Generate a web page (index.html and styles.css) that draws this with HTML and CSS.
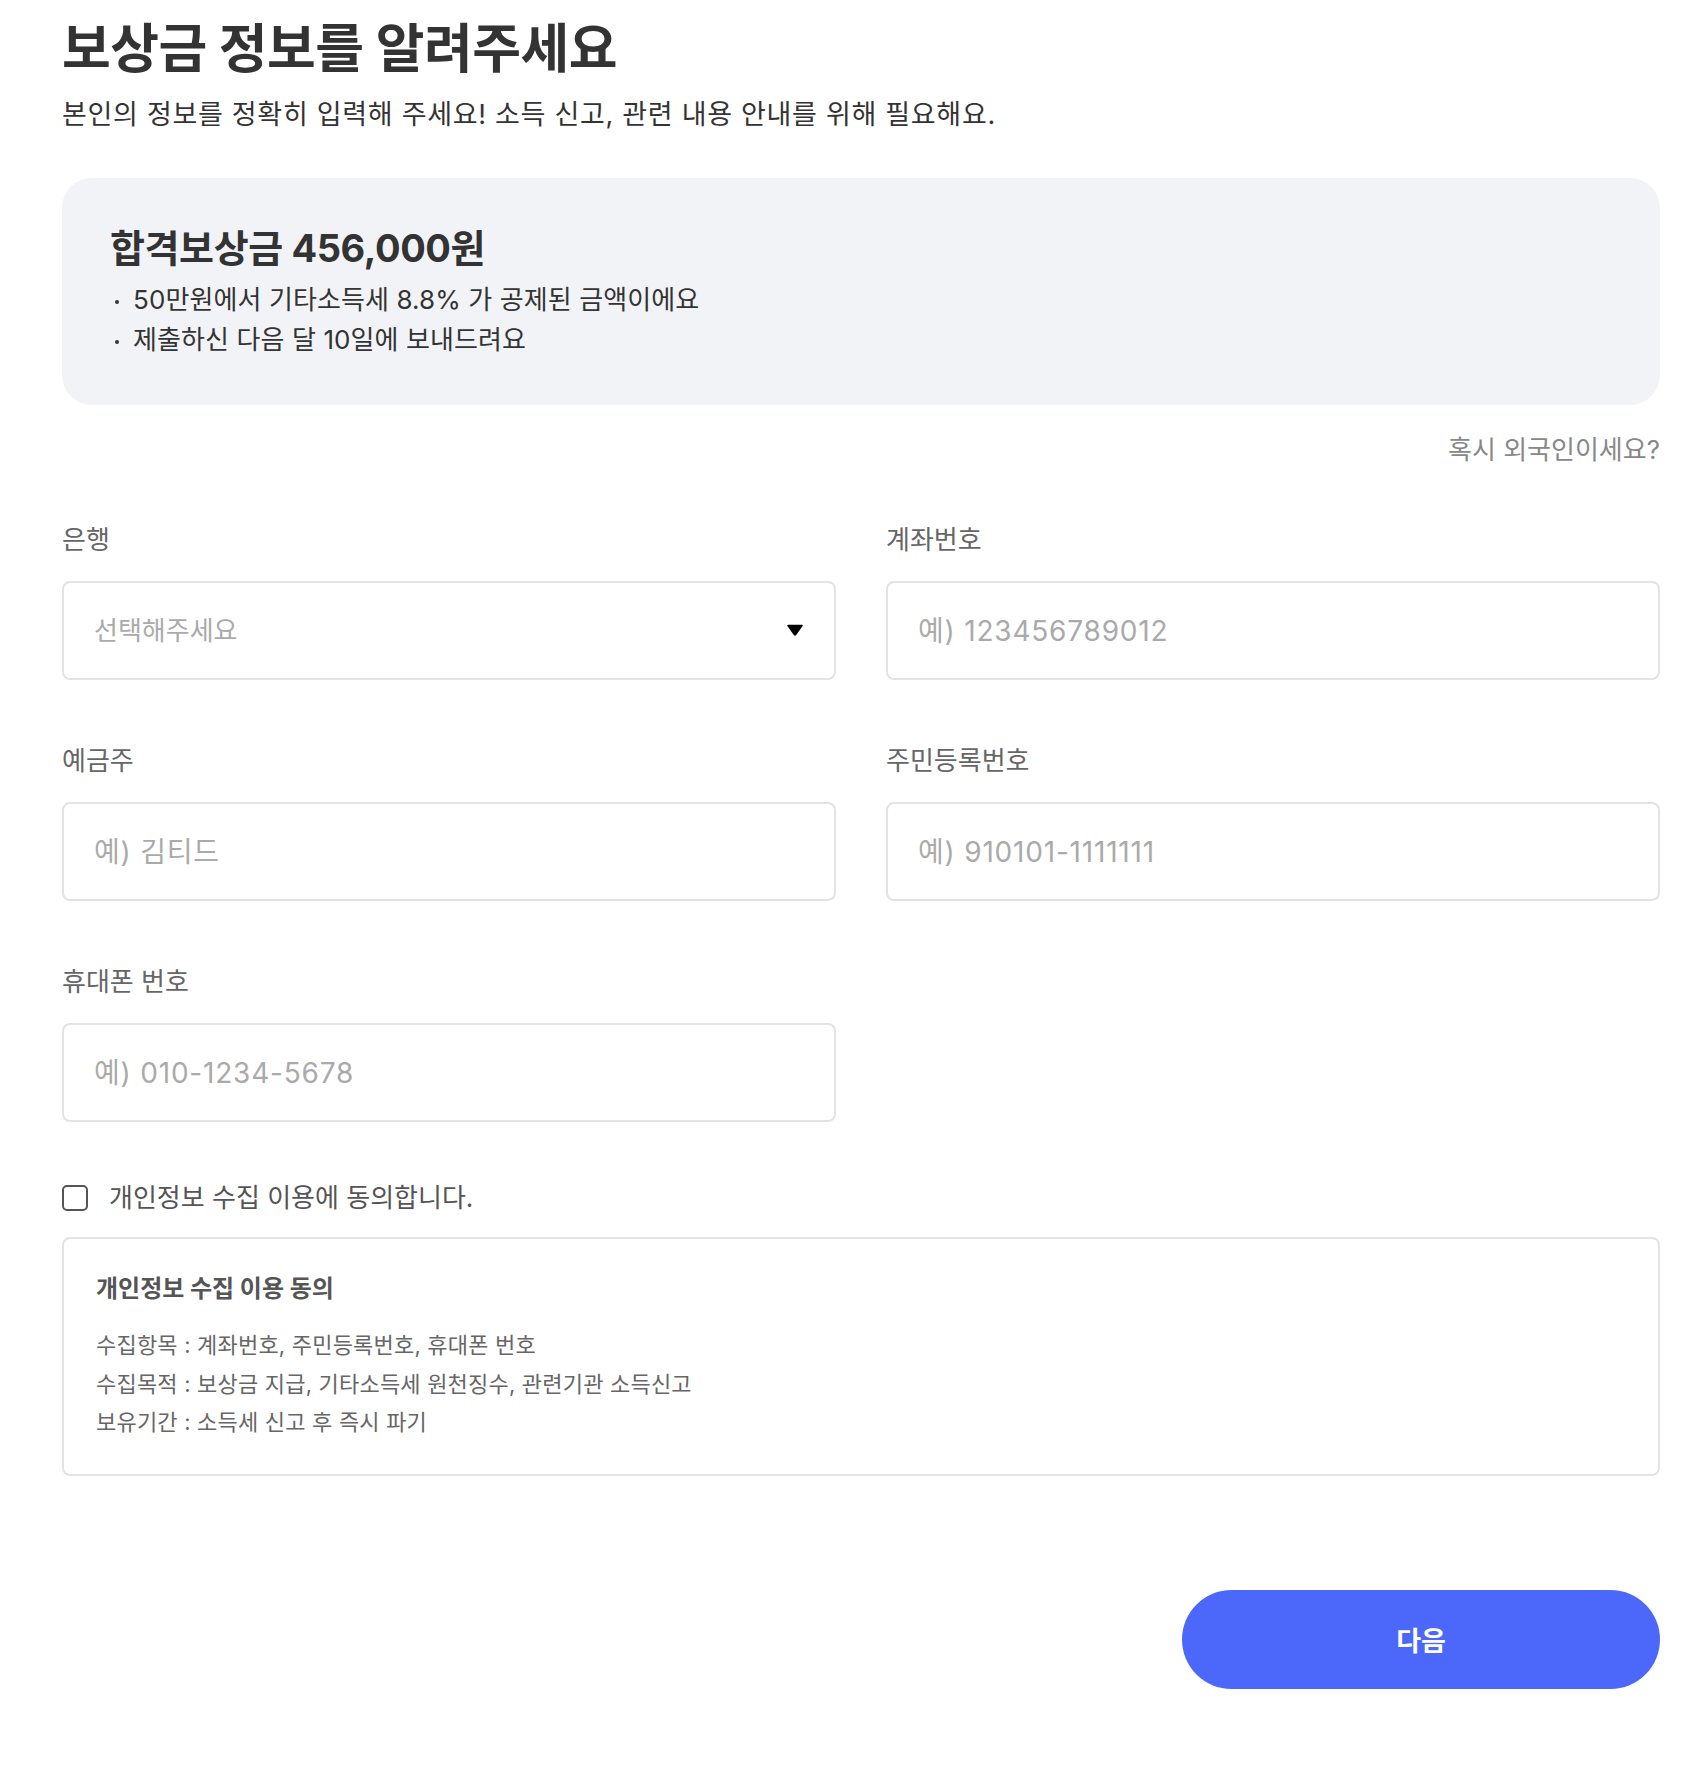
FILE: index.html
```html
<!DOCTYPE html>
<html lang="ko">
<head>
  <meta charset="UTF-8">
  <meta name="viewport" content="width=device-width, initial-scale=1.0">
  <title>보상금 정보 입력</title>
  <link rel="stylesheet" href="styles.css">
</head>
<body>
  <div class="page">
    <!-- 상단 안내 -->
    <h1 class="title">보상금 정보를 알려주세요</h1>
    <p class="subtitle">본인의 정보를 정확히 입력해 주세요! 소득 신고, 관련 내용 안내를 위해 필요해요.</p>

    <!-- 보상금 요약 -->
    <div class="reward-box">
      <h2 class="reward-title">합격보상금 456,000원</h2>
      <ul class="reward-list">
        <li>50만원에서 기타소득세 8.8% 가 공제된 금액이에요</li>
        <li>제출하신 다음 달 10일에 보내드려요</li>
      </ul>
    </div>

    <div class="foreigner-link">혹시 외국인이세요?</div>

    <!-- 입력 폼 -->
    <div class="form-grid">
      <div class="field">
        <label class="field-label">은행</label>
        <div class="select-wrap">
          <select class="field-input field-select">
            <option>선택해주세요</option>
          </select>
          <svg class="select-arrow" width="16" height="12" viewBox="0 0 16 12">
            <path d="M1 1.5 L15 1.5 L8.6 10.6 Q8 11.4 7.4 10.6 Z" fill="#000" stroke="#000" stroke-width="1.5" stroke-linejoin="round"/>
          </svg>
        </div>
      </div>
      <div class="field">
        <label class="field-label">계좌번호</label>
        <input class="field-input" type="text" placeholder="예) 123456789012">
      </div>
      <div class="field">
        <label class="field-label">예금주</label>
        <input class="field-input" type="text" placeholder="예) 김티드">
      </div>
      <div class="field">
        <label class="field-label">주민등록번호</label>
        <input class="field-input" type="text" placeholder="예) 910101-1111111">
      </div>
      <div class="field">
        <label class="field-label">휴대폰 번호</label>
        <input class="field-input" type="text" placeholder="예) 010-1234-5678">
      </div>
    </div>

    <!-- 개인정보 동의 -->
    <label class="agree-row">
      <input class="agree-check" type="checkbox">
      <span>개인정보 수집 이용에 동의합니다.</span>
    </label>

    <div class="terms-box">
      <h3 class="terms-title">개인정보 수집 이용 동의</h3>
      <p class="terms-line">수집항목 : 계좌번호, 주민등록번호, 휴대폰 번호</p>
      <p class="terms-line">수집목적 : 보상금 지급, 기타소득세 원천징수, 관련기관 소득신고</p>
      <p class="terms-line">보유기간 : 소득세 신고 후 즉시 파기</p>
    </div>

    <div class="button-row">
      <button class="next-button">다음</button>
    </div>
  </div>
</body>
</html>
```

FILE: styles.css
```css
body {
  margin: 0;
  background: #fff;
  font-family: "Inter", "Noto Sans CJK KR", sans-serif;
  color: #333;
}

/* === 페이지 틀 === */
.page {
  padding: 20px 38px 82px 62px;
}

.title {
  margin: 0;
  font-size: 53px;
  line-height: 58px;
  font-weight: 700;
  letter-spacing: -0.5px;
  color: #333;
}

.subtitle {
  margin: 19px 0 0;
  font-size: 27px;
  line-height: 36px;
  letter-spacing: 0.7px;
  color: #333;
}

/* === 보상금 박스 === */
.reward-box {
  margin-top: 45px;
  padding: 46px 48px 45px;
  background: #f2f3f7;
  border-radius: 30px;
}

.reward-title {
  margin: 0;
  font-size: 38px;
  line-height: 48px;
  font-weight: 700;
  letter-spacing: -0.4px;
  color: #333;
}

.reward-list {
  list-style: none;
  margin: 8px 0 0;
  padding: 0;
}

.reward-list li {
  position: relative;
  padding-left: 23px;
  font-size: 26px;
  line-height: 40px;
  letter-spacing: 0.1px;
  color: #333;
}

.reward-list li::before {
  content: "";
  position: absolute;
  left: 5px;
  top: 20px;
  width: 4px;
  height: 4px;
  border-radius: 50%;
  background: #333;
}

.foreigner-link {
  margin-top: 28px;
  text-align: right;
  font-size: 26px;
  line-height: 34px;
  color: #888;
  cursor: pointer;
}

/* === 입력 폼 === */
.form-grid {
  margin-top: 56px;
  display: grid;
  grid-template-columns: 1fr 1fr;
  column-gap: 50px;
  row-gap: 64px;
}

.field {
  display: flex;
  flex-direction: column;
}

.field-label {
  font-size: 26px;
  line-height: 34px;
  color: #666;
  margin-bottom: 24px;
}

.field-input {
  box-sizing: border-box;
  width: 100%;
  height: 99px;
  padding: 0 30px;
  border: 2px solid #e3e3e3;
  border-radius: 8px;
  background: #fff;
  font-family: inherit;
  font-size: 28px;
  letter-spacing: 0.8px;
  color: #333;
  outline: none;
}

.field-input::placeholder {
  color: #aaa;
}

.select-wrap {
  position: relative;
}

.field-select {
  appearance: none;
  -webkit-appearance: none;
  color: #aaa;
  font-size: 26px;
  letter-spacing: 0;
}

.select-arrow {
  position: absolute;
  right: 33px;
  top: 43px;
  pointer-events: none;
}

/* === 동의 === */
.agree-row {
  margin-top: 59px;
  display: flex;
  align-items: center;
  gap: 21px;
  font-size: 26px;
  line-height: 34px;
  color: #555;
  cursor: pointer;
}

.agree-check {
  appearance: none;
  -webkit-appearance: none;
  margin: 0;
  width: 26px;
  height: 26px;
  border: 2px solid #555;
  border-radius: 5px;
  background: #fff;
}

.terms-box {
  margin-top: 22px;
  padding: 34px 32px 32px;
  border: 2px solid #e3e3e3;
  border-radius: 8px;
}

.terms-title {
  margin: 0 0 21px;
  font-size: 24px;
  line-height: 32px;
  font-weight: 700;
  color: #555;
}

.terms-line {
  margin: 0;
  font-size: 22px;
  line-height: 38.5px;
  letter-spacing: 0.2px;
  color: #666;
}

/* === 다음 버튼 === */
.button-row {
  margin-top: 114px;
  display: flex;
  justify-content: flex-end;
}

.next-button {
  width: 478px;
  height: 99px;
  border: none;
  border-radius: 50px;
  background: #4c68fa;
  color: #fff;
  font-family: inherit;
  font-size: 27px;
  font-weight: 700;
  cursor: pointer;
}
```
